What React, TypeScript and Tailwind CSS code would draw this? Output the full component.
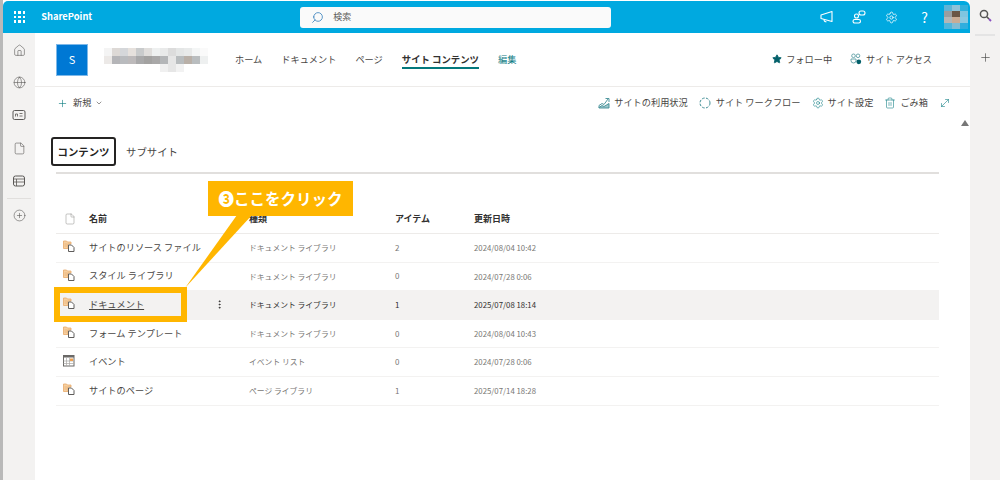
import { Home, Globe, File, CirclePlus, Settings, Star, Plus, ChevronDown, Trash2, MoveDiagonal, Search, EllipsisVertical } from "lucide-react";

const font = { fontFamily: '"Noto Sans CJK JP", "Noto Sans", sans-serif' };

type Row = { name: string; type: string; items: number; date: string; icon?: "lib" | "cal"; hover?: boolean };

const rows: Row[] = [
  { name: "サイトのリソース ファイル", type: "ドキュメント ライブラリ", items: 2, date: "2024/08/04 10:42" },
  { name: "スタイル ライブラリ", type: "ドキュメント ライブラリ", items: 0, date: "2024/07/28 0:06" },
  { name: "ドキュメント", type: "ドキュメント ライブラリ", items: 1, date: "2025/07/08 18:14", hover: true },
  { name: "フォーム テンプレート", type: "ドキュメント ライブラリ", items: 0, date: "2024/08/04 10:43" },
  { name: "イベント", type: "イベント リスト", items: 0, date: "2024/07/28 0:06", icon: "cal" },
  { name: "サイトのページ", type: "ページ ライブラリ", items: 1, date: "2025/07/14 18:28" },
];

const nameBlocks = [
  "#f4f4f4", "#ddd9d6", "#d5d7da", "#e6e1dd", "#c9cbcc", "#e0dedc", "#eef0f0", "#e9eaea", "#dcdcdc", "#e4e6e6", "#e8eaea", "#f4f6f6", "#fafafa",
  "#ece9e7", "#b5b5b8", "#b9bbbe", "#bdbabb", "#a9a9aa", "#a3a2a1", "#a9a8a8", "#b4b6b8", "#e6e6e6", "#b8bcbe", "#b9b0a8", "#b9bdbf", "#eef0f0",
  "#ffffff", "#ffffff", "#ffffff", "#ffffff", "#ffffff", "#ffffff", "#ffffff", "#f0f0f0", "#e6e6e6", "#f2f2f2", "#ffffff", "#ffffff", "#ffffff",
];

const avatar = ["#5fb4d6", "#8fc2d8", "#32b0dc", "#9a9ea0", "#6a5645", "#7fc5e0", "#b4b6b6", "#c9ac95", "#8cc8e0", "#4fb6dc", "#80bcd4", "#30aede"];

function LibIcon() {
  return (
    <svg width="12" height="12" viewBox="0 0 12 12" fill="none">
      <path d="M.5 1h3l1 1h3.5v2H5v4.5H.5z" fill="#f6cfa0" stroke="#e8a96a" strokeWidth=".8" />
      <path d="M1.5 4h3M1.5 6h3" stroke="#e8a96a" strokeWidth=".6" />
      <path d="M5.5 5h3L11 7.5v4H5.5z" fill="#fff" stroke="#5f5d5b" strokeWidth="1" />
    </svg>
  );
}

function CalIcon() {
  return (
    <svg width="12" height="12" viewBox="0 0 12 12" fill="none">
      <rect x=".5" y=".5" width="10.5" height="10.5" fill="#fff" stroke="#6b6967" />
      <rect x=".5" y=".5" width="10.5" height="2" fill="#6b6967" />
      <path d="M3.5 3v8M6.5 3v8M.5 6h10.5M.5 8.5h10.5" stroke="#a8a6a4" strokeWidth=".7" />
      <rect x="7" y="3.5" width="3" height="2.5" fill="#eea050" />
    </svg>
  );
}

function AppGrid() {
  return (
    <div className="grid grid-cols-3 gap-[2px]">
      {Array.from({ length: 9 }).map((_, i) => (
        <div key={i} className="w-[2.4px] h-[2.4px] bg-white" />
      ))}
    </div>
  );
}

function NavItem({ label, active, teal }: { label: string; active?: boolean; teal?: boolean }) {
  return (
    <div className={`relative whitespace-nowrap ${active ? "font-bold text-[#323130] text-[9.4px]" : teal ? "text-[#0f7c85]" : "text-[#484644]"}`}>
      {label}
      {active && <div className="absolute left-0 right-0 top-[15px] h-[1.5px] bg-[#03787c]" />}
    </div>
  );
}

function Command({ icon, label }: { icon: React.ReactNode; label: string }) {
  return (
    <div className="flex items-center gap-[4px] whitespace-nowrap text-[#484644]">
      {icon}
      {label}
    </div>
  );
}

export default function App() {
  return (
    <div className="relative w-[1000px] h-[480px] overflow-hidden bg-white flex text-[9.2px]" style={font}>
      <div className="w-[3px] h-full bg-[#b9b9b9] shrink-0" />
      <div className="w-[967px] flex flex-col shrink-0">
        <div className="mt-px h-[32px] bg-[#00a9e0] rounded-tl-[5px] rounded-tr-[6px] flex items-center relative shrink-0">
          <div className="ml-[11px]"><AppGrid /></div>
          <div className="ml-[16px] text-white font-semibold text-[9.3px]">SharePoint</div>
          <div className="ml-[208px] w-[311px] h-[21px] bg-[#fafafa] rounded-[3px] flex items-center">
            <Search size={13} className="ml-[11px] text-[#2a78b8] -scale-x-100" strokeWidth={1.4} />
            <span className="ml-[9px] text-[#605e5c] text-[9px]">検索</span>
          </div>
          <div className="ml-auto flex items-center text-white">
            <svg width="14" height="14" viewBox="0 0 14 14" fill="none" stroke="currentColor" strokeWidth="1.1" strokeLinejoin="round">
              <path d="M1 5l11-3.5v10L1 8.5z" />
              <path d="M4 9.5c0 1.5 1 2.5 2.5 2.2" />
            </svg>
            <svg width="14" height="14" viewBox="0 0 14 14" fill="none" stroke="currentColor" strokeWidth="1.1" className="ml-[18px]">
              <rect x="7" y="1" width="6" height="4" rx="2" />
              <circle cx="4.5" cy="6" r="2" />
              <rect x="1" y="9.5" width="7.5" height="3.5" rx="1.7" />
            </svg>
            <Settings size={13} strokeWidth={1.4} className="ml-[19px]" />
            <span className="ml-[23px] text-[14px] leading-none">?</span>
            <div className="ml-[16px] mr-[2px] grid grid-cols-3 w-[24px] h-[24px]">
              {avatar.map((c, i) => (
                <div key={i} className="w-[8px] h-[6px]" style={{ backgroundColor: c }} />
              ))}
            </div>
          </div>
        </div>
        <div className="flex flex-1 min-h-0">
          <div className="w-[32px] bg-[#f3f2f1] shrink-0 flex flex-col items-center pt-[11px] text-[#5a5856]">
            <Home size={13} strokeWidth={1.1} />
            <Globe size={13} strokeWidth={1.1} className="mt-[19px]" />
            <svg width="14" height="14" viewBox="0 0 14 14" fill="none" stroke="currentColor" className="mt-[19px]">
              <rect x="1" y="2.5" width="12" height="9" rx="1.5" />
              <path d="M3.5 8.5V6h2v2.5M7.5 5.5h3M7.5 8h3" strokeWidth=".8" />
            </svg>
            <File size={13} strokeWidth={1.1} className="mt-[20px]" />
            <svg width="14" height="14" viewBox="0 0 14 14" fill="none" stroke="currentColor" className="mt-[19px]">
              <rect x="1.5" y="2" width="11" height="10" rx="2" />
              <path d="M1.5 5h11M1.5 8h11M4.5 5v7" strokeWidth=".8" />
            </svg>
            <div className="w-[24px] h-px bg-[#e1dfdd] mt-[10px]" />
            <CirclePlus size={13} strokeWidth={1.1} className="mt-[10px]" />
          </div>
          <div className="flex-1 flex flex-col min-w-0 relative">
            <div className="h-[54px] flex items-center pl-[21px] pr-[38px] border-b border-[#edebe9] shrink-0">
              <div className="w-[32px] h-[32px] bg-[#0078d4] border border-[#7eb8e8] text-white text-[11px] flex items-center justify-center">S</div>
              <div className="ml-[16px] w-[104px] grid [grid-template-columns:repeat(13,8px)]">
                {nameBlocks.map((c, i) => (
                  <div key={i} className="h-[8px]" style={{ backgroundColor: c }} />
                ))}
              </div>
              <div className="ml-[27px] flex items-center gap-[19px]">
                <NavItem label="ホーム" />
                <NavItem label="ドキュメント" />
                <NavItem label="ページ" />
                <NavItem label="サイト コンテンツ" active />
                <NavItem label="編集" teal />
              </div>
              <div className="ml-auto flex items-center gap-[18px]">
                <Command icon={<Star size={10} className="text-[#03606a] fill-[#03606a]" />} label="フォロー中" />
                <Command
                  icon={
                    <svg width="12" height="12" viewBox="0 0 12 12" fill="none" stroke="#5f9ea5" strokeWidth=".9">
                      <circle cx="3.5" cy="2.8" r="1.8" />
                      <circle cx="8" cy="2.8" r="1.8" />
                      <path d="M1 6h5v1.5a2.5 2.5 0 0 1-5 0z" />
                      <circle cx="8.8" cy="8.8" r="2.4" fill="#03606a" stroke="none" />
                    </svg>
                  }
                  label="サイト アクセス"
                />
              </div>
            </div>
            <div className="h-[32px] flex items-center pl-[22px] pr-[19px] shrink-0">
              <Plus size={11} strokeWidth={1.3} className="text-[#03787c]" />
              <span className="ml-[5px] text-[#484644]">新規</span>
              <ChevronDown size={8} className="ml-[4px] text-[#605e5c]" />
              <div className="ml-auto flex items-center gap-[11px]">
                <Command
                  icon={
                    <svg width="12" height="12" viewBox="0 0 12 12" fill="none" stroke="#3f8d95" strokeWidth=".9">
                      <path d="M1 11V8.5l3-2 2 1L10 2" />
                      <path d="M7.5 1.5H11V5" />
                      <path d="M1 11h10V6.5L6 9.5 4 8.5 1 10.5z" fill="#9cc8cc" />
                    </svg>
                  }
                  label="サイトの利用状況"
                />
                <div className="flex items-center gap-[5px] whitespace-nowrap text-[#484644]">
                  <svg width="12" height="12" viewBox="0 0 12 12" fill="none" stroke="#3f8d95" strokeWidth="1" strokeDasharray="2.6 1.4">
                    <circle cx="6" cy="6" r="5" />
                  </svg>
                  サイト ワークフロー
                </div>
                <Command icon={<Settings size={12} strokeWidth={1.1} className="text-[#03787c]" />} label="サイト設定" />
                <Command icon={<Trash2 size={12} strokeWidth={1.1} className="text-[#03787c]" />} label="ごみ箱" />
                <MoveDiagonal size={12} strokeWidth={1.1} className="text-[#03787c]" />
              </div>
            </div>
            <div className="flex-1 pl-[21px] pr-[31px] pt-[18px]">
              <div className="flex items-center text-[10.4px]">
                <div className="-ml-[5px] w-[65px] h-[29px] border-2 border-[#252423] rounded-[3px] flex items-center justify-center font-bold text-[#252423]">コンテンツ</div>
                <div className="ml-[10px] text-[#484644]">サブサイト</div>
              </div>
              <div className="mt-[6px] h-[2px] bg-[#e1dfdd]" />
              <div className="mt-[30px] h-[30px] flex items-center border-b border-[#edebe9] font-bold text-[#323130] text-[9px]">
                <div className="w-[33px] pl-[8px] shrink-0"><File size={12} strokeWidth={1} className="text-[#8a8886]" /></div>
                <div className="w-[160px] shrink-0">名前</div>
                <div className="w-[146px] shrink-0">種類</div>
                <div className="w-[79px] shrink-0">アイテム</div>
                <div>更新日時</div>
              </div>
              {rows.map((r) => (
                <div key={r.name} className={`h-[28.6px] flex items-center border-b border-[#f3f2f1] ${r.hover ? "bg-[#f3f2f1]" : ""}`}>
                  <div className="w-[33px] pl-[7px] pb-[3px] shrink-0">{r.icon === "cal" ? <CalIcon /> : <LibIcon />}</div>
                  <div className={`w-[160px] shrink-0 flex items-center text-[#484644] ${r.hover ? "underline" : ""}`}>
                    <span className="w-[129px] whitespace-nowrap">{r.name}</span>
                    {r.hover && <EllipsisVertical size={11} className="text-[#323130] ml-[-4px]" />}
                  </div>
                  <div className={`w-[146px] shrink-0 text-[7.8px] ${r.hover ? "text-[#323130]" : "text-[#797775]"}`}>{r.type}</div>
                  <div className={`w-[79px] shrink-0 text-[8px] ${r.hover ? "text-[#323130]" : "text-[#797775]"}`}>{r.items}</div>
                  <div className={`text-[7.8px] ${r.hover ? "text-[#323130]" : "text-[#797775]"}`}>{r.date}</div>
                </div>
              ))}
            </div>
          </div>
        </div>
      </div>
      <div className="w-[30px] bg-[#f3f2f1] shrink-0 flex flex-col items-center pt-[9px]">
        <svg width="13" height="13" viewBox="0 0 13 13" fill="none">
          <circle cx="5" cy="5" r="3.6" stroke="#555" strokeWidth="1.5" />
          <path d="M7.8 7.8L10 10" stroke="#555" strokeWidth="1.6" />
          <path d="M10 10l2 2" stroke="#8a4fc0" strokeWidth="1.8" />
        </svg>
        <div className="mt-[12px] w-[20px] h-[2px] bg-[#e4e4e4]" />
        <Plus size={13} strokeWidth={1.2} className="mt-[15px] text-[#444]" />
      </div>
      {/* scroll arrow */}
      <div className="absolute left-[961px] top-[120px] w-0 h-0 border-x-[4px] border-x-transparent border-b-[6px] border-b-[#777]" />
      {/* annotation */}
      <div className="absolute left-[54px] top-[287px] w-[133px] h-[35px] border-[6px] border-[#ffb600]" />
      <svg className="absolute left-[180px] top-[210px]" width="80" height="84" viewBox="0 0 80 84">
        <path d="M57 5 L72 5 L5 78Z" fill="#ffb600" />
      </svg>
      <div className="absolute left-[208px] top-[181px] w-[145px] h-[35px] bg-[#ffb600] text-white font-bold text-[15.5px] flex items-center justify-center">❸ここをクリック</div>
    </div>
  );
}
